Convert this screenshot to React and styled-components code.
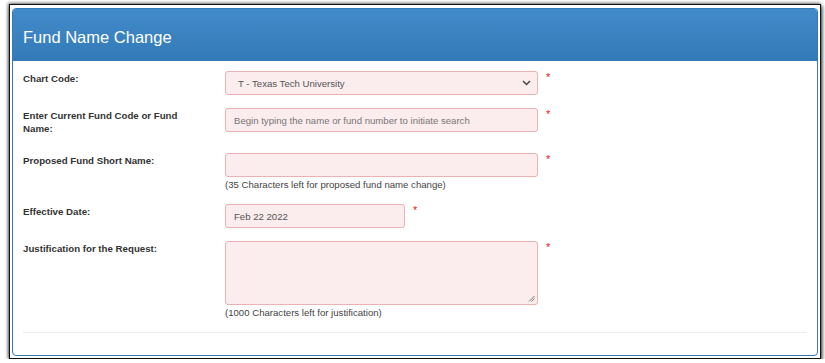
import styled, { createGlobalStyle } from "styled-components";

const GlobalStyle = createGlobalStyle`
  html, body {
    margin: 0;
    padding: 0;
    background: #ffffff;
  }
  body {
    font-family: "Liberation Sans", Arial, sans-serif;
  }
`;

const Window = styled.div`
  box-sizing: border-box;
  margin: 4px 0 0 9px;
  width: 812px;
  height: 355px;
  border: 1px solid #111;
  box-shadow: 1px 2px 4px rgba(0, 0, 0, 0.85), -1px -1px 3px rgba(0, 0, 0, 0.5);
  padding: 3px 2px 2px 2px;
  background: #fff;
  display: flex;
`;

const Panel = styled.div`
  flex: 1;
  display: flex;
  flex-direction: column;
  border: 1px solid #337ab7;
  border-radius: 4px;
  overflow: hidden;
  background: #fff;
`;

const PanelHeader = styled.div`
  height: 52px;
  display: flex;
  align-items: center;
  padding: 4px 10px 0 10px;
  background: linear-gradient(to bottom, #428bca 0%, #3379b7 100%);
  color: #fff;
  font-size: 16.5px;
  box-sizing: border-box;
`;

const PanelBody = styled.div`
  flex: 1;
  padding: 10px 10px 0 10px;
`;

const Row = styled.div`
  display: grid;
  grid-template-columns: 202px auto 1fr;
  align-items: start;
  margin-bottom: 13px;
`;

const Label = styled.label`
  font-size: 9.7px;
  line-height: 13px;
  font-weight: bold;
  color: #333;
  padding: 1px 0 5px 0;
  max-width: 170px;
`;

const Field = styled.div`
  display: flex;
  flex-direction: column;
`;

const Control = styled.div`
  position: relative;
  box-sizing: border-box;
  width: ${(p) => p.$width || 313}px;
  height: ${(p) => p.$height || 24}px;
  background: #fbeced;
  border: 1px solid #eab2b3;
  border-radius: 3px;
  display: flex;
  align-items: center;
  padding: 0 ${(p) => p.$padRight || 8}px 0 ${(p) => p.$padLeft || 8}px;
  font-size: 9.6px;
  color: ${(p) => (p.$placeholder ? "#777" : "#555")};
`;

const Chevron = styled.svg`
  margin-left: auto;
  width: 9px;
  height: 6px;
`;

const Grip = styled.svg`
  position: absolute;
  right: 2px;
  bottom: 2px;
  width: 7px;
  height: 7px;
`;

const Required = styled.span`
  color: #e62020;
  font-size: 11px;
  padding: 1px 0 0 8px;
  line-height: 11px;
`;

const Hint = styled.div`
  font-size: 9.6px;
  line-height: 13px;
  color: #444;
  margin-top: 1px;
`;

const Divider = styled.div`
  border-top: 1px solid #eeeeee;
  margin-top: 13px;
`;

function FormRow({ label, children, hint }) {
  return (
    <Row>
      <Label>{label}</Label>
      <Field>
        {children}
        {hint && <Hint>{hint}</Hint>}
      </Field>
      <Required>*</Required>
    </Row>
  );
}

export default function App() {
  return (
    <>
      <GlobalStyle />
      <Window>
        <Panel>
          <PanelHeader>Fund Name Change</PanelHeader>
          <PanelBody>
            <FormRow label="Chart Code:">
              <Control $padLeft={12} $padRight={6}>
                T - Texas Tech University
                <Chevron viewBox="0 0 9 6">
                  <path d="M1 1 L4.5 4.5 L8 1" fill="none" stroke="#444" strokeWidth="1.5" />
                </Chevron>
              </Control>
            </FormRow>
            <FormRow label="Enter Current Fund Code or Fund Name:">
              <Control $placeholder>
                Begin typing the name or fund number to initiate search
              </Control>
            </FormRow>
            <FormRow
              label="Proposed Fund Short Name:"
              hint="(35 Characters left for proposed fund name change)"
            >
              <Control />
            </FormRow>
            <FormRow label="Effective Date:">
              <Control $width={180}>Feb 22 2022</Control>
            </FormRow>
            <FormRow
              label="Justification for the Request:"
              hint="(1000 Characters left for justification)"
            >
              <Control $height={64}>
                <Grip viewBox="0 0 7 7">
                  <path d="M1 6.5 L6.5 1 M3.5 6.5 L6.5 3.5" stroke="#666" strokeWidth="0.9" />
                </Grip>
              </Control>
            </FormRow>
            <Divider />
          </PanelBody>
        </Panel>
      </Window>
    </>
  );
}
